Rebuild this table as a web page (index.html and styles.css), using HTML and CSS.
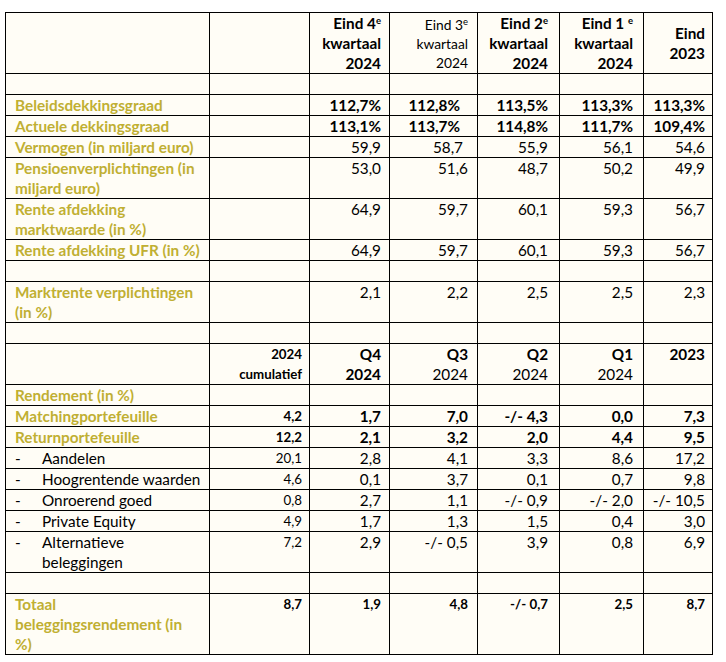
FILE: index.html
```html
<!DOCTYPE html>
<html lang="nl">
<head>
<meta charset="utf-8">
<title>Kerncijfers</title>
<link rel="stylesheet" href="styles.css">
</head>
<body>
<table class="kc">
  <colgroup>
    <col class="c1"><col class="c2"><col class="c3"><col class="c4"><col class="c5"><col class="c6"><col class="c7">
  </colgroup>
  <tbody>
    <tr class="h3">
      <td></td><td></td>
      <td class="b">Eind 4<sup>e</sup><br>kwartaal<br>2024</td>
      <td class="sm">Eind 3<sup>e</sup><br>kwartaal<br>2024</td>
      <td class="b">Eind 2<sup>e</sup><br>kwartaal<br>2024</td>
      <td class="b">Eind 1 <sup>e</sup><br>kwartaal<br>2024</td>
      <td class="b mid">Eind<br>2023</td>
    </tr>
    <tr class="empty"><td></td><td></td><td></td><td></td><td></td><td></td><td></td></tr>
    <tr class="b"><td class="lbl">Beleidsdekkingsgraad</td><td></td><td>112,7%</td><td class="xp">112,8%</td><td>113,5%</td><td>113,3%</td><td>113,3%</td></tr>
    <tr class="b"><td class="lbl">Actuele dekkingsgraad</td><td></td><td>113,1%</td><td class="xp">113,7%</td><td>114,8%</td><td>111,7%</td><td>109,4%</td></tr>
    <tr><td class="lbl">Vermogen (in miljard euro)</td><td></td><td>59,9</td><td class="xp2">58,7</td><td>55,9</td><td>56,1</td><td>54,6</td></tr>
    <tr><td class="lbl">Pensioenverplichtingen (in<br>miljard euro)</td><td></td><td>53,0</td><td>51,6</td><td>48,7</td><td>50,2</td><td>49,9</td></tr>
    <tr><td class="lbl">Rente afdekking<br>marktwaarde (in %)</td><td></td><td>64,9</td><td>59,7</td><td>60,1</td><td>59,3</td><td>56,7</td></tr>
    <tr><td class="lbl">Rente afdekking UFR (in %)</td><td></td><td>64,9</td><td>59,7</td><td>60,1</td><td>59,3</td><td>56,7</td></tr>
    <tr class="empty"><td></td><td></td><td></td><td></td><td></td><td></td><td></td></tr>
    <tr><td class="lbl">Marktrente verplichtingen<br>(in %)</td><td></td><td>2,1</td><td>2,2</td><td>2,5</td><td>2,5</td><td>2,3</td></tr>
    <tr class="empty"><td></td><td></td><td></td><td></td><td></td><td></td><td></td></tr>
    <tr>
      <td></td>
      <td class="sm b">2024<br>cumulatief</td>
      <td class="b">Q4<br>2024</td>
      <td><b>Q3</b><br>2024</td>
      <td><b>Q2</b><br>2024</td>
      <td><b>Q1</b><br>2024</td>
      <td class="b">2023</td>
    </tr>
    <tr><td class="lbl">Rendement (in %)</td><td></td><td></td><td></td><td></td><td></td><td></td></tr>
    <tr class="b"><td class="lbl">Matchingportefeuille</td><td class="sm">4,2</td><td>1,7</td><td>7,0</td><td>-/- 4,3</td><td>0,0</td><td>7,3</td></tr>
    <tr class="b"><td class="lbl">Returnportefeuille</td><td class="sm">12,2</td><td>2,1</td><td>3,2</td><td>2,0</td><td>4,4</td><td>9,5</td></tr>
    <tr><td class="sub"><span class="dash">-</span>Aandelen</td><td class="sm">20,1</td><td>2,8</td><td>4,1</td><td>3,3</td><td>8,6</td><td>17,2</td></tr>
    <tr><td class="sub"><span class="dash">-</span>Hoogrentende waarden</td><td class="sm">4,6</td><td>0,1</td><td>3,7</td><td>0,1</td><td>0,7</td><td>9,8</td></tr>
    <tr><td class="sub"><span class="dash">-</span>Onroerend goed</td><td class="sm">0,8</td><td>2,7</td><td>1,1</td><td>-/- 0,9</td><td>-/- 2,0</td><td>-/- 10,5</td></tr>
    <tr><td class="sub"><span class="dash">-</span>Private Equity</td><td class="sm">4,9</td><td>1,7</td><td>1,3</td><td>1,5</td><td>0,4</td><td>3,0</td></tr>
    <tr><td class="sub"><span class="dash">-</span>Alternatieve<br><span class="dash"></span>beleggingen</td><td class="sm">7,2</td><td>2,9</td><td>-/- 0,5</td><td>3,9</td><td>0,8</td><td>6,9</td></tr>
    <tr class="empty"><td></td><td></td><td></td><td></td><td></td><td></td><td></td></tr>
    <tr class="b"><td class="lbl">Totaal<br>beleggingsrendement (in<br>%)</td><td class="sm">8,7</td><td class="sm">1,9</td><td class="sm">4,8</td><td class="sm">-/- 0,7</td><td class="sm">2,5</td><td class="sm">8,7</td></tr>
  </tbody>
</table>
</body>
</html>
```

FILE: styles.css
```css
html, body {
  margin: 0;
  background: #ffffff;
}
body {
  padding: 12px 0 0 5px;
  font-family: "Lato", "Carlito", "Liberation Sans", sans-serif;
  font-size: 15.3px;
  line-height: 20px;
  color: #000000;
}
.kc {
  border-collapse: collapse;
  table-layout: fixed;
  width: 707px;
  background: #fffdf6;
}
.c1 { width: 204px; }
.c2 { width: 100px; }
.c3 { width: 80px; }
.c4 { width: 88px; }
.c5 { width: 82px; }
.c6 { width: 84px; }
.c7 { width: 69px; }

.kc td {
  border: 1px solid #000000;
  padding: 0 9px 0 8px;
  vertical-align: top;
  text-align: right;
  white-space: nowrap;
  height: 20px;
}
.kc td:nth-child(2) { padding-right: 7px; }
.kc td:nth-child(3) { padding-right: 8px; }
.kc td:nth-child(4) { padding-right: 9px; }
.kc td:nth-child(5) { padding-right: 11px; }
.kc td:nth-child(6) { padding-right: 10px; }
.kc td:nth-child(7) { padding-right: 7px; }
.kc td.xp { padding-right: 17px; }
.kc td.xp2 { padding-right: 14px; }

.kc td.lbl {
  text-align: left;
  color: #c0af32;
  font-weight: 700;
  padding-left: 9px;
}
.kc td.sub {
  text-align: left;
  padding-left: 9px;
}
.dash {
  display: inline-block;
  width: 27px;
}
.b td, td.b { font-weight: 700; }
.kc td.sm {
  font-size: 13.3px;
}
.h3 td.sm {
  font-size: 13.8px;
  line-height: 19px;
  padding-top: 2px;
}
.kc td.mid { vertical-align: middle; }
sup {
  font-size: 9.5px;
  line-height: 0;
  vertical-align: 5px;
}
```
